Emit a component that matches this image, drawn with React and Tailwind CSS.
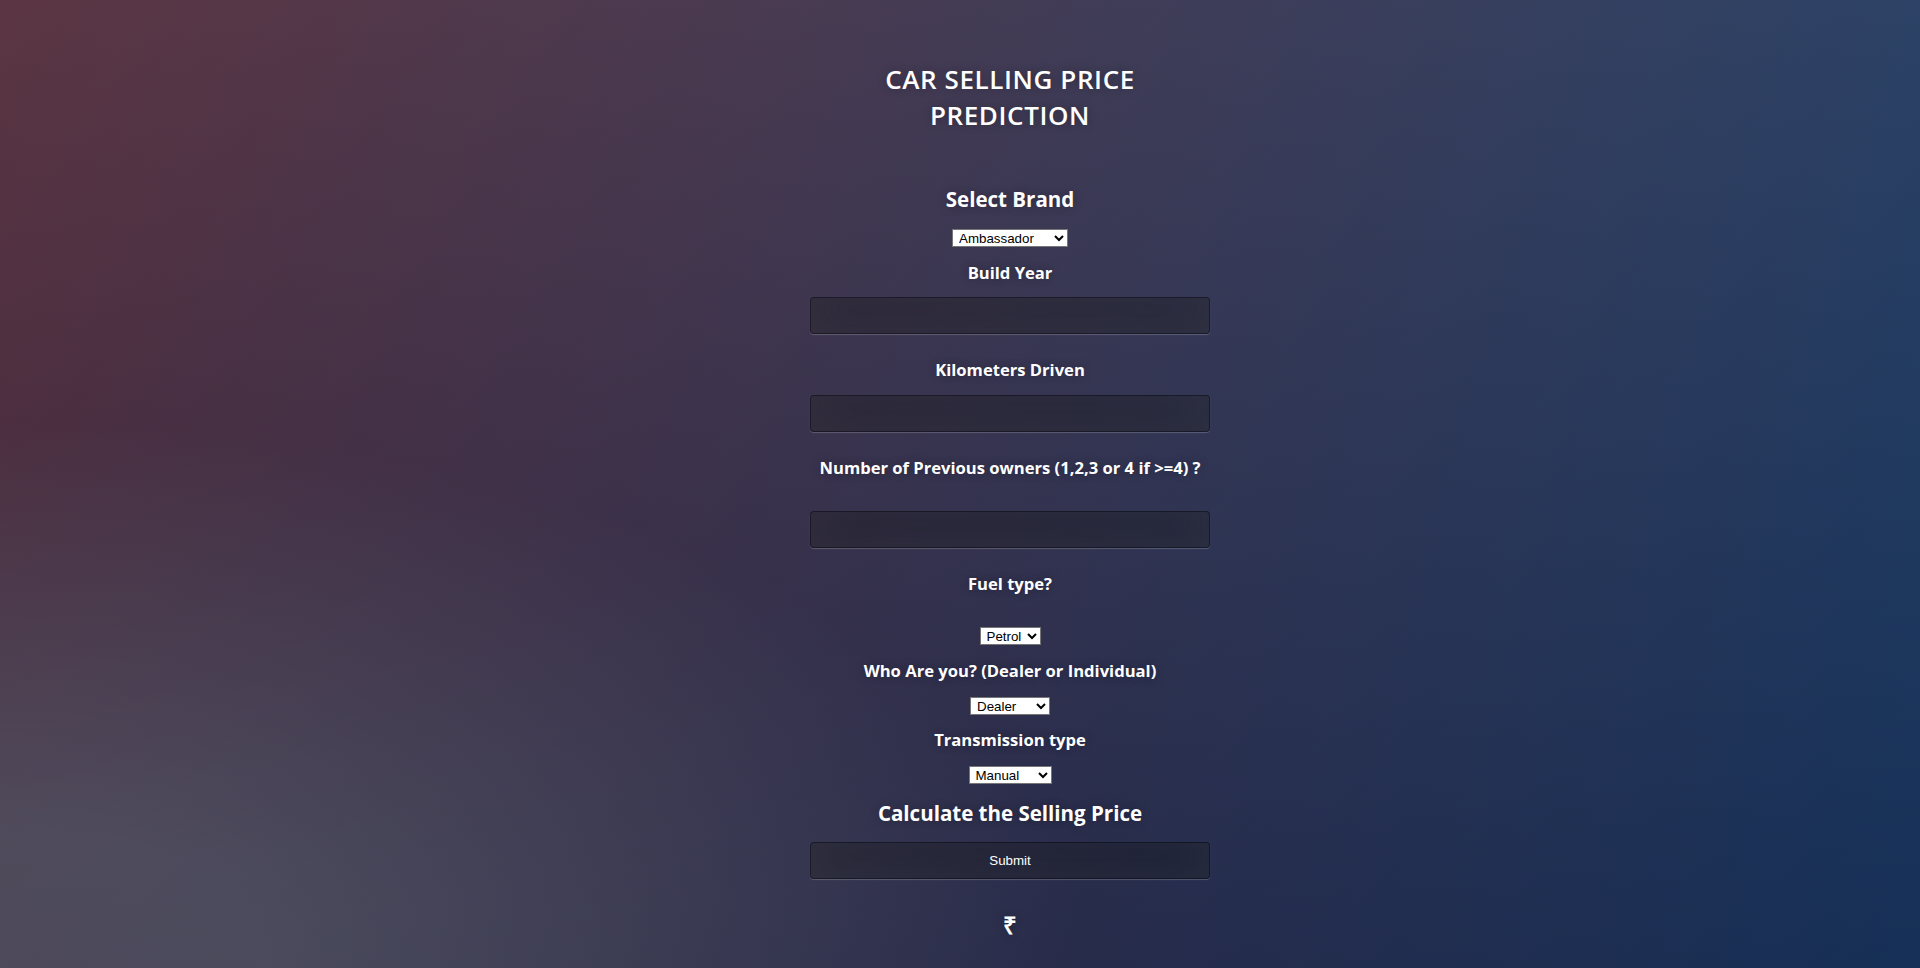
import React from "react";

const shadow = "[text-shadow:0_0_10px_rgba(0,0,0,0.3)]";
const field =
  "block w-[400px] h-[37px] rounded-[4px] border border-[rgba(0,0,0,0.3)] bg-[rgba(0,0,0,0.3)] shadow-[inset_0_-5px_45px_rgba(100,100,100,0.2),0_1px_1px_rgba(255,255,255,0.2)] text-white text-[13.33px] px-[10px] outline-none";
const sel =
  "block h-[18px] bg-white text-black border border-[#767676] text-[13.33px] leading-[16px] pl-[2px] font-['Liberation_Sans',Arial,sans-serif]";

function Label({ children, className = "" }) {
  return (
    <h3
      className={`text-[16.6px] leading-[24px] font-bold text-white text-center whitespace-nowrap ${shadow} ${className}`}
    >
      {children}
    </h3>
  );
}

export default function App() {
  return (
    <div className="h-[968px] w-full overflow-hidden bg-[image:radial-gradient(ellipse_at_0%_100%,rgba(104,128,138,.4)_10%,rgba(138,114,76,0)_40%),linear-gradient(to_bottom,rgba(57,173,219,.25)_0%,rgba(42,60,87,.4)_100%),linear-gradient(135deg,#670d10_0%,#092756_100%)] font-['Open_Sans',sans-serif]">
      <div className="flex justify-center pl-[100px]">
        <div className="w-[400px] flex flex-col items-center pt-[61px]">
          <h1
            className={`text-[26px] leading-[36px] font-semibold tracking-[0.6px] text-white text-center ${shadow}`}
          >
            CAR SELLING PRICE
            <br />
            PREDICTION
          </h1>

          <h2
            className={`mt-[51px] text-[20.5px] leading-[30px] font-bold text-white text-center ${shadow}`}
          >
            Select Brand
          </h2>
          <select className={`${sel} mt-[15px] w-[116px]`} defaultValue="Ambassador">
            <option>Ambassador</option>
            <option>Audi</option>
            <option>BMW</option>
            <option>Chevrolet</option>
            <option>Datsun</option>
            <option>Fiat</option>
            <option>Ford</option>
            <option>Honda</option>
            <option>Hyundai</option>
            <option>Mahindra</option>
            <option>Maruti</option>
            <option>Toyota</option>
          </select>

          <Label className="mt-[14px]">Build Year</Label>
          <input type="text" className={`${field} mt-[12px]`} />

          <Label className="mt-[24px]">Kilometers Driven</Label>
          <input type="text" className={`${field} mt-[13px]`} />

          <Label className="mt-[24px]">
            Number of Previous owners (1,2,3 or 4 if &gt;=4) ?
          </Label>
          <input type="text" className={`${field} mt-[31px]`} />

          <Label className="mt-[24px]">Fuel type?</Label>
          <select className={`${sel} mt-[31px] w-[61px]`} defaultValue="Petrol">
            <option>Petrol</option>
            <option>Diesel</option>
            <option>CNG</option>
          </select>

          <Label className="mt-[14px]">Who Are you? (Dealer or Individual)</Label>
          <select className={`${sel} mt-[14px] w-[80px]`} defaultValue="Dealer">
            <option>Dealer</option>
            <option>Individual</option>
          </select>

          <Label className="mt-[13px]">Transmission type</Label>
          <select className={`${sel} mt-[14px] w-[83px]`} defaultValue="Manual">
            <option>Manual</option>
            <option>Automatic</option>
          </select>

          <h2
            className={`mt-[14px] text-[20.5px] leading-[30px] font-bold text-white text-center ${shadow}`}
          >
            Calculate the Selling Price
          </h2>
          <button
            type="button"
            className={`${field} mt-[14px] text-center font-['Liberation_Sans',Arial,sans-serif]`}
          >
            Submit
          </button>

          <h2
            className={`mt-[30px] text-[24px] leading-[32px] font-bold text-white text-center ${shadow}`}
          >
            ₹
          </h2>
        </div>
      </div>
    </div>
  );
}
